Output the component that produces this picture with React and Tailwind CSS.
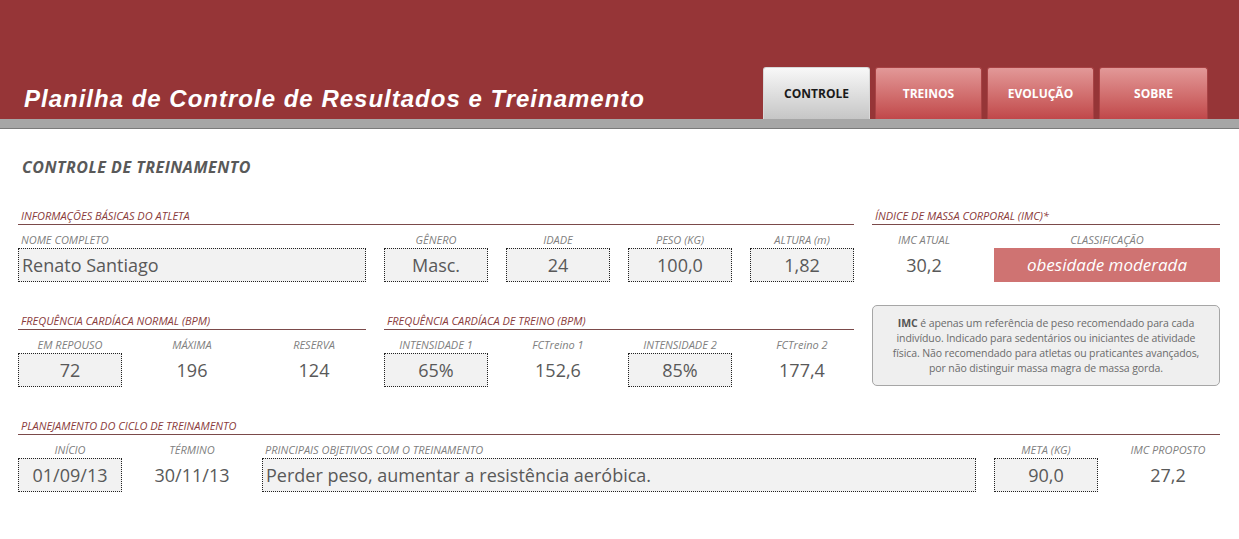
import React from 'react';

const Heading = ({ children, className = '' }) => (
  <div className={`flex items-end pl-[3px] pb-[1px] border-b border-[#7b4a4a] text-[11px] leading-[14px] italic text-[#8a3b3b] ${className}`}>
    {children}
  </div>
);

const Label = ({ children, className = '', left = false }) => (
  <div className={`flex items-end ${left ? 'justify-start pl-[3px]' : 'justify-center'} pb-[1px] text-[11px] leading-[14px] italic text-[#808080] ${className}`}>
    {children}
  </div>
);

const Box = ({ children, className = '', left = false }) => (
  <div className={`flex items-center ${left ? 'justify-start pl-[3px]' : 'justify-center'} bg-[#f2f2f2] border border-dotted border-[#222] text-[18px] text-[#595959] ${className}`}>
    {children}
  </div>
);

const Value = ({ children, className = '' }) => (
  <div className={`flex items-center justify-center text-[18px] text-[#595959] ${className}`}>{children}</div>
);

const tabs = ['CONTROLE', 'TREINOS', 'EVOLUÇÃO', 'SOBRE'];

export default function App() {
  return (
    <div className="w-[1239px] h-[539px] bg-white overflow-hidden font-['Open_Sans',sans-serif]">
      {/* header */}
      <div className="h-[119px] bg-[#963537] flex items-end">
        <h1 className="pl-[24px] pb-[5px] text-[24px] leading-[30px] tracking-[1px] font-bold italic text-white font-['Liberation_Sans',Arial,sans-serif]">
          Planilha de Controle de Resultados e Treinamento
        </h1>
        <div className="ml-auto mr-[31px] flex gap-[5px]">
          {tabs.map((t, i) => (
            <div
              key={t}
              className={`${i === 3 ? 'w-[109px]' : 'w-[107px]'} h-[52px] rounded-t-[3px] flex items-center justify-center text-[12px] font-bold ${
                i === 0
                  ? 'bg-gradient-to-b from-[#f8f8f8] to-[#c6c6c6] text-[#1a1a1a] border border-[#d8d8d8] border-b-0'
                  : 'bg-gradient-to-b from-[#e29898] to-[#c0474a] text-white border border-[#a84244] border-b-0'
              }`}
            >
              {t}
            </div>
          ))}
        </div>
      </div>
      <div className="h-[10px] bg-[#a6a6a6] border-b border-[#7a7a7a]" />

      {/* body */}
      <div className="pl-[18px]">
        <h2 className="pt-[28px] pl-[4px] text-[16px] leading-[20px] tracking-[0.5px] font-bold italic text-[#595959]">CONTROLE DE TREINAMENTO</h2>

        {/* section 1 */}
        <div className="mt-[31px] grid grid-cols-[repeat(10,104px)] grid-rows-[17px_23px_34px] gap-x-[18px]">
          <Heading className="col-span-7">INFORMAÇÕES BÁSICAS DO ATLETA</Heading>
          <Heading className="col-span-3">ÍNDICE DE MASSA CORPORAL (IMC)*</Heading>

          <Label left className="col-span-3">NOME COMPLETO</Label>
          <Label>GÊNERO</Label>
          <Label>IDADE</Label>
          <Label>PESO (KG)</Label>
          <Label>ALTURA (m)</Label>
          <Label>IMC ATUAL</Label>
          <Label className="col-span-2">CLASSIFICAÇÃO</Label>

          <Box left className="col-span-3">Renato Santiago</Box>
          <Box>Masc.</Box>
          <Box>24</Box>
          <Box>100,0</Box>
          <Box>1,82</Box>
          <Value>30,2</Value>
          <div className="col-span-2 flex items-center justify-center bg-[#cf7372] text-[17px] italic text-white">obesidade moderada</div>
        </div>

        {/* section 2 */}
        <div className="mt-[31px] grid grid-cols-[repeat(10,104px)] grid-rows-[17px_23px_34px] gap-x-[18px]">
          <Heading className="col-span-3">FREQUÊNCIA CARDÍACA NORMAL (BPM)</Heading>
          <Heading className="col-span-4">FREQUÊNCIA CARDÍACA DE TREINO (BPM)</Heading>
          <div className="col-start-8 col-span-3 row-start-1 row-span-3 -mt-[8px] h-[81px] rounded-[5px] bg-[#efefef] border border-[#a6a6a6] flex items-center justify-center px-[6px] text-center text-[10.5px] leading-[15px] text-[#6b6b6b] tracking-[-0.1px]">
            <p>
              <b className="text-[#555]">IMC</b> é apenas um referência de peso recomendado para cada
              <br />
              indivíduo. Indicado para sedentários ou iniciantes de atividade
              <br />
              física. Não recomendado para atletas ou praticantes avançados,
              <br />
              por não distinguir massa magra de massa gorda.
            </p>
          </div>

          <Label>EM REPOUSO</Label>
          <Label>MÁXIMA</Label>
          <Label>RESERVA</Label>
          <Label>INTENSIDADE 1</Label>
          <Label>FCTreino 1</Label>
          <Label>INTENSIDADE 2</Label>
          <Label>FCTreino 2</Label>

          <Box>72</Box>
          <Value>196</Value>
          <Value>124</Value>
          <Box>65%</Box>
          <Value>152,6</Value>
          <Box>85%</Box>
          <Value>177,4</Value>
        </div>

        {/* section 3 */}
        <div className="mt-[31px] grid grid-cols-[repeat(10,104px)] grid-rows-[17px_23px_34px] gap-x-[18px]">
          <Heading className="col-span-10">PLANEJAMENTO DO CICLO DE TREINAMENTO</Heading>

          <Label>INÍCIO</Label>
          <Label>TÉRMINO</Label>
          <Label left className="col-span-6">PRINCIPAIS OBJETIVOS COM O TREINAMENTO</Label>
          <Label>META (KG)</Label>
          <Label>IMC PROPOSTO</Label>

          <Box>01/09/13</Box>
          <Value>30/11/13</Value>
          <Box left className="col-span-6">Perder peso, aumentar a resistência aeróbica.</Box>
          <Box>90,0</Box>
          <Value>27,2</Value>
        </div>
      </div>
    </div>
  );
}
